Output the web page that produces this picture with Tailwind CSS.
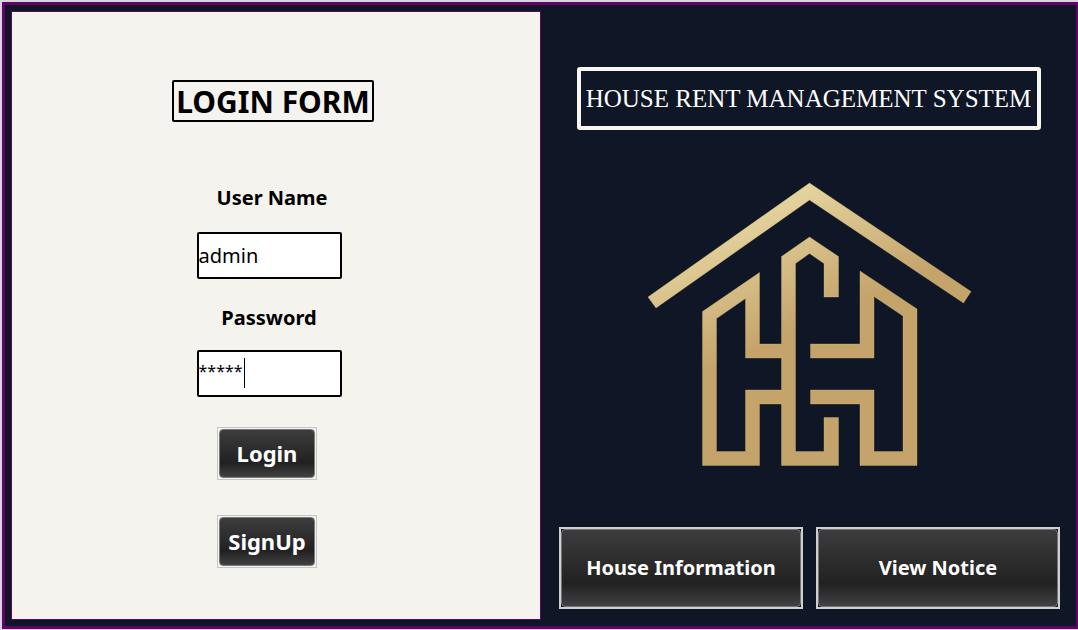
<!DOCTYPE html>
<html lang="en">
<head>
<meta charset="utf-8">
<meta name="viewport" content="width=device-width, initial-scale=1">
<title>House Rent Management System</title>
<script src="https://cdn.jsdelivr.net/npm/@tailwindcss/browser@4"></script>
</head>
<body class="min-h-screen flex flex-col pt-[2px] pl-[2px] pb-px bg-[#d6d7e0] font-['Noto_Sans',sans-serif] text-black">
<main class="grow grid grid-cols-[530fr_535fr] bg-[#0f1626] border-[#660066] border-y-3 border-l-3 border-r-2 pl-1.5 py-1.5">
  <section class="bg-[#f5f3ee] border border-[#660066]">
    <div class="pt-17 pr-1.5 flex justify-center">
      <h1 class="h-[42px] w-[202px] flex items-center justify-center whitespace-nowrap border-2 border-black rounded-[2px] text-[30px] font-bold">LOGIN FORM</h1>
    </div>
    <form class="pt-[62px] pr-3.5 flex flex-col items-center">
      <label for="user" class="pl-1.5 text-[20px] leading-7 font-bold">User Name</label>
      <input id="user" type="text" value="admin" class="mt-5 w-[145px] h-[47px] border-2 border-black rounded-[2px] bg-white text-[20px] outline-none">
      <label for="pass" class="mt-[25px] text-[20px] leading-7 font-bold">Password</label>
      <div class="mt-[18px] relative">
        <input id="pass" type="text" value="*****" autocomplete="off" class="block w-[145px] h-[47px] pb-1.5 border-2 border-black rounded-[2px] bg-white text-[16px] outline-none">
        <span class="absolute left-[47px] top-2 w-px h-[30px] bg-black"></span>
      </div>
      <div class="pt-[30px] pr-1 flex flex-col gap-[35px]">
        <button type="button" class="w-[100px] h-[53px] p-px border border-[#c6c6c6] text-white text-[22px] font-bold"><span class="flex h-full items-center justify-center rounded-[4px] border border-[#77797b] bg-linear-to-b from-[#3d3d3d] via-[#212121] via-70% to-[#424242]">Login</span></button>
        <button type="button" class="w-[100px] h-[53px] p-px border border-[#c6c6c6] text-white text-[22px] font-bold"><span class="flex h-full items-center justify-center rounded-[4px] border border-[#77797b] bg-linear-to-b from-[#3d3d3d] via-[#212121] via-70% to-[#424242]">SignUp</span></button>
      </div>
    </form>
  </section>
  <section class="flex flex-col items-center pt-14">
    <h2 class="w-[464px] h-[63px] flex items-center justify-center whitespace-nowrap border-4 border-[#f8f6ef] rounded-[3px] text-white text-[25px] font-['Liberation_Serif',serif]">HOUSE RENT MANAGEMENT SYSTEM</h2>
    <svg class="mt-[50px] w-[340px] h-[290px]" viewBox="639 180 340 290" role="img" aria-label="House logo">
      <defs>
        <linearGradient id="gold" gradientUnits="userSpaceOnUse" x1="760" y1="195" x2="817" y2="321">
          <stop offset="0" stop-color="#e8d8a4"/>
          <stop offset="1" stop-color="#c4a46b"/>
        </linearGradient>
      </defs>
      <g fill="url(#gold)" fill-rule="evenodd" stroke="#d9b676" stroke-opacity=".5" stroke-width=".7">
        <path d="M809.5 183 971 291.5 963.500 303 809.500 200 656 308 648 297Z"/>
        <path d="M781.500 256.500 809.500 237 838.500 256.500V297H824V263.500L809.500 253.500 795.500 263.500V451.500H824V417.500H838.500V465.500H781.500V404H759.500V465.500H702.500V311.500L759.500 272.500V344H781.500ZM745.500 298.500 716.500 318.500V451.500H745.500V390H781.500V358H745.500Z"/>
        <path d="M860 271 917 309V465.500H860V404H810.500V390H874V451.500H903V316L874 296.500V358H810.500V344H860Z"/>
      </g>
    </svg>
    <div class="mt-[57px] w-full pl-[18px] pr-4 grid grid-cols-2 gap-[13px]">
      <button type="button" class="h-[82px] border-2 border-[#cfcfcf] text-white text-[20px] font-bold"><span class="flex h-full items-center justify-center rounded-[4px] border border-[#72757b] bg-linear-to-b from-[#3d3d3d] via-[#212121] via-70% to-[#424242]">House Information</span></button>
      <button type="button" class="h-[82px] border-2 border-[#cfcfcf] text-white text-[20px] font-bold"><span class="flex h-full items-center justify-center rounded-[4px] border border-[#72757b] bg-linear-to-b from-[#3d3d3d] via-[#212121] via-70% to-[#424242]">View Notice</span></button>
    </div>
  </section>
</main>
</body>
</html>
